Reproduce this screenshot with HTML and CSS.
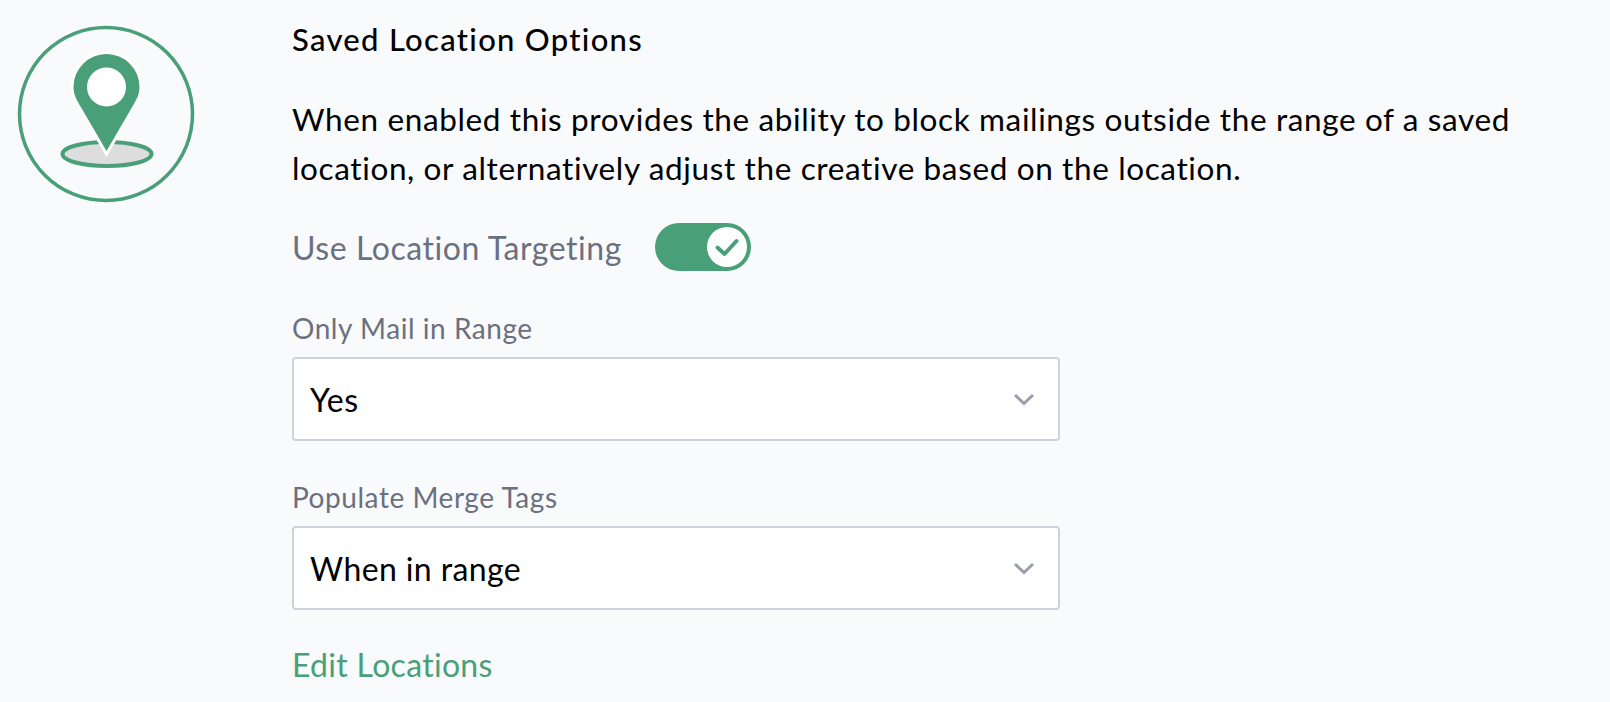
FILE: index.html
```html
<!DOCTYPE html>
<html>
  <head>
    <meta charset="utf-8">
    <title>Saved Location Options</title>
    <link rel="stylesheet" href="styles.css">
  </head>
  <body>
    <main class="options">
      <div class="icon-col">
        <svg class="pin-icon" width="178" height="178" viewBox="0 0 178 178">
          <circle cx="89" cy="89" r="86.5" fill="none" stroke="#49a078" stroke-width="3.5"/>
          <ellipse cx="90" cy="129" rx="44.5" ry="12" fill="#dddddd" stroke="#49a078" stroke-width="4"/>
          <path d="M89.5 126 L65 84 C59 74 56.5 69 56.5 62 A33 33 0 0 1 122.5 62 C122.5 69 120 74 114 84 Z" fill="#49a078" stroke="#fff" stroke-width="6" paint-order="stroke"/>
          <circle cx="89.5" cy="62" r="19.5" fill="#fff"/>
        </svg>
      </div>
      <div class="content">
        <h2 class="title">Saved Location Options</h2>
        <p class="desc">When enabled this provides the ability to block mailings outside the range of a saved location, or alternatively adjust the creative based on the location.</p>
        <div class="toggle-row">
          <span class="toggle-label">Use Location Targeting</span>
          <span class="toggle">
            <span class="knob">
              <svg width="26" height="26" viewBox="0 0 26 26"><path d="M3.5 13.5 L10.5 20 L22.5 7" fill="none" stroke="#49a078" stroke-width="4" stroke-linecap="round" stroke-linejoin="round"/></svg>
            </span>
          </span>
        </div>
        <div class="field">
          <label class="field-label">Only Mail in Range</label>
          <div class="select">
            <span>Yes</span>
            <svg class="chev" width="22" height="13" viewBox="0 0 22 13"><path d="M2 2 L11 10.5 L20 2" fill="none" stroke="#9a9eac" stroke-width="3"/></svg>
          </div>
        </div>
        <div class="field">
          <label class="field-label">Populate Merge Tags</label>
          <div class="select">
            <span>When in range</span>
            <svg class="chev" width="22" height="13" viewBox="0 0 22 13"><path d="M2 2 L11 10.5 L20 2" fill="none" stroke="#9a9eac" stroke-width="3"/></svg>
          </div>
        </div>
        <a class="edit-link" href="#">Edit Locations</a>
      </div>
    </main>
  </body>
</html>
```

FILE: styles.css
```css
html, body {
  margin: 0;
  padding: 0;
  height: 702px;
  overflow: hidden;
}
body {
  background-color: #f9fafc;
  color: #000;
  font-family: Lato, "Noto Sans", sans-serif;
}
.options {
  display: flex;
  padding: 25px 0 0 17px;
}
.icon-col {
  width: 276px;
  flex: none;
}
.pin-icon {
  display: block;
}
.content {
  width: 1260px;
  margin-left: -1px;
}
.title {
  margin: -1px 0 0;
  font-size: 31px;
  font-weight: 500;
  line-height: 30px;
  letter-spacing: 1.3px;
}
.desc {
  margin: 41px 0 0;
  font-size: 31.5px;
  line-height: 49px;
  letter-spacing: 0.63px;
}
.toggle-row {
  display: flex;
  align-items: center;
  gap: 33px;
  margin-top: 30px;
}
.toggle-label {
  font-size: 32px;
  letter-spacing: 0.55px;
  color: #6b7080;
}
.toggle {
  display: flex;
  justify-content: flex-end;
  align-items: center;
  width: 96px;
  height: 48px;
  padding: 4px;
  box-sizing: border-box;
  border-radius: 24px;
  background-color: #49a078;
}
.knob {
  display: flex;
  align-items: center;
  justify-content: center;
  width: 40px;
  height: 40px;
  border-radius: 50%;
  background-color: #fff;
}
.field {
  margin-top: 39px;
}
.field-label {
  display: block;
  font-size: 28px;
  line-height: 36px;
  letter-spacing: 0.55px;
  color: #6b7080;
}
.select {
  display: flex;
  align-items: center;
  justify-content: space-between;
  width: 768px;
  height: 84px;
  margin-top: 11px;
  padding: 0 23px 0 16px;
  box-sizing: border-box;
  background-color: #fff;
  border: 2px solid #cfd2da;
  border-radius: 4px;
  font-size: 32px;
  letter-spacing: 0.4px;
}
.field + .field {
  margin-top: 38px;
}
.edit-link {
  display: block;
  margin-top: 35px;
  font-size: 32px;
  letter-spacing: 0.3px;
  color: #49a078;
  text-decoration: none;
}
```
